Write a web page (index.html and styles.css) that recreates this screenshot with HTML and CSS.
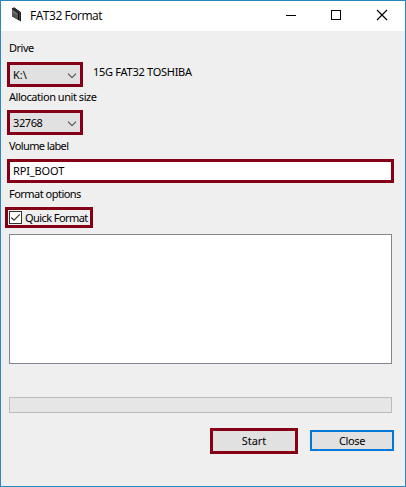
FILE: index.html
```html
<!DOCTYPE html>
<html lang="en">
<head>
<meta charset="utf-8">
<title>FAT32 Format</title>
<link rel="stylesheet" href="styles.css">
</head>
<body>
<div class="window">
  <header class="titlebar">
    <svg class="app-icon" width="12" height="18" viewBox="0 0 12 18">
      <path d="M1 2L3 1.5L10 6.5V15.5L8 14.5L1 10.5Z" fill="#3c3c3c"/>
      <path d="M1 2L7 6.5V13.5L1 10Z" fill="#555"/>
      <path d="M1.5 5L6 8.5" stroke="#888"/>
      <path d="M1 2.3L7.5 7V14" stroke="#111" fill="none"/>
      <path d="M3 1.7L9.5 6.4V15" stroke="#222" fill="none"/>
    </svg>
    <h1 class="title"><span>FAT32 Format</span></h1>
    <svg class="controls" width="104" height="12" viewBox="0 0 104 12" fill="none" stroke="#000">
      <path d="M0 6.5H10"/>
      <rect x="45.5" y="1.5" width="9" height="9"/>
      <path d="M91 1L101 11M101 1L91 11" stroke-width="1.2"/>
    </svg>
  </header>
  <main class="form">
    <div class="label drive-label"><span class="t-drive">Drive</span></div>
    <div class="drive-row">
      <div class="combo"><span class="t-k">K:\</span><svg width="10" height="6" viewBox="0 0 10 6"><path d="M1 .7L5 4.7L9 .7" fill="none" stroke="#555" stroke-width="1.2"/></svg></div>
      <span class="drive-info">15G FAT32 TOSHIBA</span>
    </div>
    <div class="label"><span class="t-alloc">Allocation unit size</span></div>
    <div class="combo"><span class="t-size">32768</span><svg width="10" height="6" viewBox="0 0 10 6"><path d="M1 .7L5 4.7L9 .7" fill="none" stroke="#555" stroke-width="1.2"/></svg></div>
    <div class="label volume-label"><span class="t-volume">Volume label</span></div>
    <div class="input"><span class="t-boot">RPI_BOOT</span></div>
    <div class="label options-label"><span class="t-options">Format options</span></div>
    <div class="check">
      <svg width="13" height="13" viewBox="0 0 13 13"><rect x=".5" y=".5" width="12" height="12" fill="#fff" stroke="#333"/><path d="M2.3 6.5L5 9.2L10.8 3.4" fill="none" stroke="#333" stroke-width="1.2"/></svg>
      <span class="t-quick">Quick Format</span>
    </div>
    <div class="log"></div>
    <div class="progress"></div>
    <div class="actions">
      <div class="button start"><span class="t-start">Start</span></div>
      <div class="button close"><span class="t-close">Close</span></div>
    </div>
  </main>
</div>
</body>
</html>
```
FILE: styles.css
```css
* { box-sizing: border-box; }
body {
  margin: 0;
  font: 11px/16px "Noto Sans", "Open Sans", sans-serif;
  color: #000;
}
.window {
  width: 406px;
  height: 487px;
  border: 1px solid #2a87c0;
  background: #efefef;
}
.titlebar {
  display: flex;
  height: 30px;
  background: #fff;
  padding-left: 10px;
}
.app-icon { margin-top: 5px; }
.title {
  margin: 7px 0 0 7px;
  font: 12px/16px "Open Sans", sans-serif;
  letter-spacing: -.46px;
  white-space: nowrap;
}
.controls { margin: 8px 15px 0 auto; }
.form { padding: 0 11px 0 6px; }
.label {
  height: 23px;
  padding: 2px 0 0 2px;
  white-space: nowrap;
}
.drive-label { height: 31px; padding-top: 9px; }
.volume-label { height: 24px; padding-top: 3px; }
.options-label { height: 24px; padding-top: 3px; }
.t-drive { letter-spacing: -.5px; }
.t-alloc { letter-spacing: -.46px; }
.t-volume { letter-spacing: -.62px; }
.t-options { letter-spacing: -.52px; }
.t-quick { letter-spacing: -.58px; }
.t-boot { letter-spacing: -.13px; }
.t-size { letter-spacing: -.4px; }
.t-close { letter-spacing: -.4px; }
.drive-row { display: flex; }
.combo {
  display: flex;
  justify-content: space-between;
  width: 76px;
  height: 25px;
  border: 3px solid #850016;
  background: #e1e1e1;
  padding: 2px 3px 0 3px;
}
.combo svg { margin-top: 6px; }
.drive-info {
  margin: 2px 0 0 10px;
  letter-spacing: -.27px;
  white-space: nowrap;
}
.input {
  width: 387px;
  height: 24px;
  border: 3px solid #850016;
  background: #fff;
  padding: 1px 3px;
}
.check {
  display: flex;
  width: 88px;
  height: 21px;
  margin-left: -2px;
  border: 3px solid #850016;
  padding-left: 1px;
  white-space: nowrap;
}
.check svg { margin-top: 1px; flex: none; }
.check span { margin-left: 3px; }
.log {
  width: 383px;
  height: 130px;
  margin: 6px 0 0 2px;
  border: 1px solid #828790;
  background: #fff;
}
.progress {
  width: 383px;
  height: 16px;
  margin: 33px 0 0 2px;
  border: 1px solid #bcbcbc;
  background: #e6e6e6;
}
.actions {
  display: flex;
  align-items: flex-start;
  justify-content: flex-end;
  gap: 12px;
  margin-top: 15px;
}
.button {
  display: flex;
  justify-content: center;
  background: #e1e1e1;
}
.start {
  width: 88px;
  height: 26px;
  border: 3px solid #850016;
  padding-top: 2px;
}
.close {
  width: 84px;
  height: 21px;
  margin-top: 2px;
  border: 2px solid #0078d7;
  padding-top: 1px;
}
```
